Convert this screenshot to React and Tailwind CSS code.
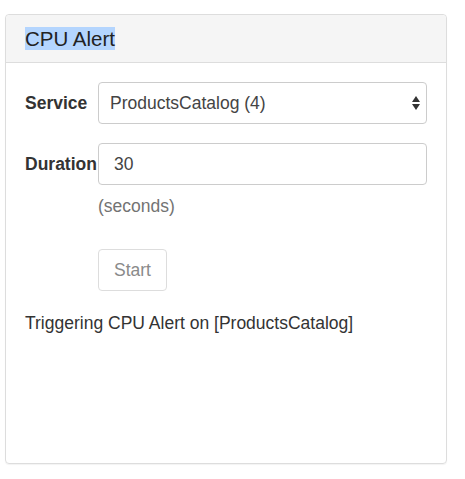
import React from 'react';

const font = { fontFamily: '"Liberation Sans", Arial, sans-serif' };

// up/down arrows drawn by the browser on a mac select
const SelectArrows = () => (
  <svg width="8" height="14" viewBox="0 0 8 14" className="absolute right-[7px] top-1/2 -translate-y-1/2">
    <path d="M4 0 L8 6 L0 6 Z" fill="#333" />
    <path d="M0 8 L8 8 L4 14 Z" fill="#333" />
  </svg>
);

export default function App() {
  return (
    <div className="min-h-screen bg-white pl-[5px] pt-[14px]" style={font}>
      <div className="w-[442px] h-[450px] border border-[#dddddd] rounded-[4px] flex flex-col shadow-[0_1px_1px_rgba(0,0,0,0.05)]">
        {/* header */}
        <div className="h-[48px] bg-[#f5f5f5] border-b border-[#dddddd] rounded-t-[4px] pl-[19px] flex items-center">
          <span className="text-[20.5px] leading-[23px] text-[#222] bg-[#b4d5fe]">CPU Alert</span>
        </div>

        {/* body */}
        <div className="pl-[19px] pr-[19px] pt-[19px] text-[17.5px] text-[#333]">
          <div className="flex items-center">
            <label className="w-[73px] font-bold">Service</label>
            <div className="relative flex-1">
              <div className="h-[42px] border border-[#cccccc] rounded-[4px] pl-[11px] flex items-center text-[#444]">
                ProductsCatalog (4)
              </div>
              <SelectArrows />
            </div>
          </div>

          <div className="flex items-center mt-[19px]">
            <label className="w-[73px] font-bold whitespace-nowrap">Duration</label>
            <div className="flex-1 h-[42px] border border-[#cccccc] rounded-[4px] pl-[15px] flex items-center text-[#444]">
              30
            </div>
          </div>

          <div className="ml-[73px] mt-[10px] text-[#737373] leading-[22px]">(seconds)</div>

          <div className="ml-[73px] mt-[32px]">
            <button className="w-[69px] h-[42px] border border-[#dddddd] rounded-[4px] text-[#8a8a8a] bg-white">
              Start
            </button>
          </div>

          <p className="mt-[22px] leading-[20px] text-[#333]">Triggering CPU Alert on [ProductsCatalog]</p>
        </div>
      </div>
    </div>
  );
}
